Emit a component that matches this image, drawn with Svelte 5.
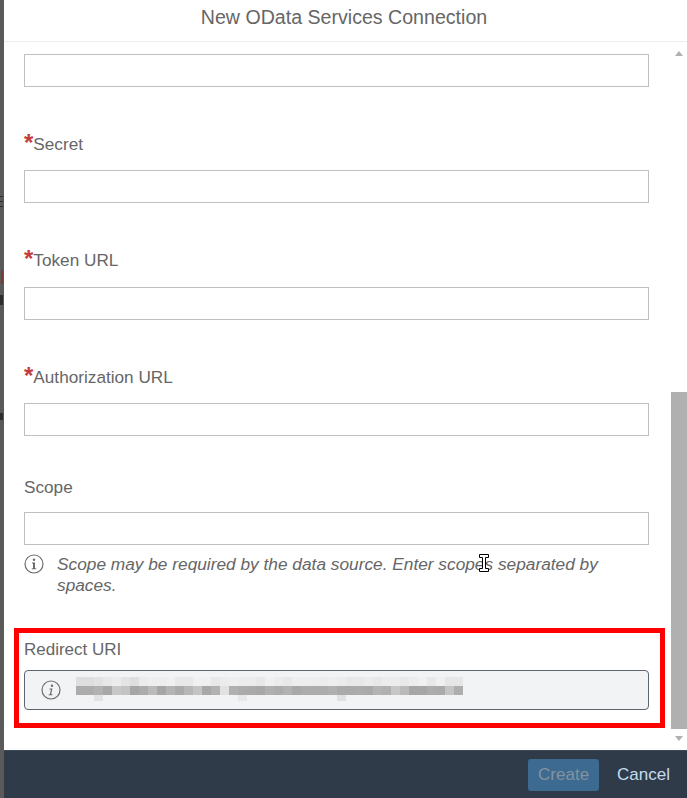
<script>
  const fields = [
    { label: 'Secret', required: true },
    { label: 'Token URL', required: true },
    { label: 'Authorization URL', required: true }
  ];

  // pixelated redirect uri, grey levels per 9px cell
  const topRow = [222,222,226,232,236,228,222,236,238,238,240,232,232,240,240,232,236,238,236,236,232,240,236,232,238,238,238,236,238,236,232,232,236,232,236,236,232,236,240,232,240,230,230];
  const midRow = [172,172,178,168,200,196,166,172,186,166,180,170,182,196,168,178,226,176,172,170,168,176,172,178,168,172,172,172,176,170,170,172,170,180,176,198,186,166,166,172,170,196,174];
  const lowCells = [{ i: 2, c: 226 }, { i: 18, c: 232 }, { i: 29, c: 224 }];
</script>

<div class="page">
  <div class="backdrop">
    <i class="mark line" style="top:196px"></i>
    <i class="mark line" style="top:201px"></i>
    <i class="mark line" style="top:206px"></i>
    <i class="mark red" style="top:270px;height:14px"></i>
    <i class="mark" style="top:295px;height:10px"></i>
    <i class="mark" style="top:413px;height:7px"></i>
  </div>

  <div class="dialog">
    <header>New OData Services Connection</header>

    <div class="middle">
      <div class="content">
        <input class="input first" type="text" />

        {#each fields as f}
          <div class="label"><span class="star">*</span>{f.label}</div>
          <input class="input" type="text" />
        {/each}

        <div class="label scope">Scope</div>
        <input class="input" type="text" />

        <div class="hint">
          <svg width="20" height="20" viewBox="0 0 20 20">
            <circle cx="10" cy="10" r="9" fill="none" stroke="#6a6d70" stroke-width="1.2" />
            <circle cx="10" cy="5.800" r="1.200" fill="#6a6d70" />
            <path d="M8 8.600h3v5.600h1.200v1H7.800v-1H9V9.600H8z" fill="#6a6d70" />
          </svg>
          <p>Scope may be required by the data source. Enter scopes separated by spaces.</p>
        </div>

        <div class="highlight">
          <div class="label redirect">Redirect URI</div>
          <div class="readonly">
            <svg width="20" height="20" viewBox="0 0 20 20">
              <circle cx="10" cy="10" r="9" fill="none" stroke="#6a6d70" stroke-width="1.2" />
              <circle cx="11" cy="5.800" r="1.200" fill="#6a6d70" />
              <path d="M8.600 8.600h2.800l-1.200 5.600h1.300l-.2 1H7.600l.2-1h1.100l1-4.600H8.400z" fill="#6a6d70" />
            </svg>
            <div class="blur">
              <div class="row">
                {#each topRow as c}
                  <span style="background:rgb({c},{c},{c})"></span>
                {/each}
              </div>
              <div class="row">
                {#each midRow as c}
                  <span style="background:rgb({c},{c},{c})"></span>
                {/each}
              </div>
              <div class="row low">
                {#each lowCells as l}
                  <span style="margin-left:{l.i * 9}px;background:rgb({l.c},{l.c},{l.c})"></span>
                {/each}
              </div>
            </div>
          </div>
        </div>
      </div>

      <div class="scrollbar">
        <div class="up"></div>
        <div class="track"><div class="thumb"></div></div>
        <div class="down"></div>
      </div>
    </div>

    <footer>
      <button class="create" disabled>Create</button>
      <button class="cancel">Cancel</button>
    </footer>
  </div>

  <!-- mouse cursor caught in the screenshot -->
  <svg class="cursor" width="10" height="19" viewBox="0 0 10 19">
    <path d="M.5.500h9v3h-3v11h3v3h-9v-3h3v-11h-3z" fill="#fff" stroke="#000" stroke-width="1" />
  </svg>
</div>

<style>
  :global(body) {
    margin: 0;
    background: #555;
  }

  .page {
    position: relative;
    display: flex;
    width: 687px;
    height: 798px;
    overflow: hidden;
    font-family: "Liberation Sans", Arial, sans-serif;
    font-size: 17.200px;
    color: #666;
  }

  .backdrop {
    position: relative;
    flex: 0 0 4px;
    background: #5a5a5a;
  }

  .mark {
    position: absolute;
    left: 0;
    width: 3px;
    background: #2d2d2d;
  }
  .mark.line {
    height: 1px;
  }
  .mark.red {
    left: 1px;
    width: 2px;
    background: #7a3a38;
  }

  .dialog {
    flex: 1;
    display: flex;
    flex-direction: column;
    min-width: 0;
    background: #fff;
  }

  header {
    flex: 0 0 42px;
    box-sizing: border-box;
    padding-right: 3px;
    border-bottom: 1px solid #eee;
    text-align: center;
    font-size: 19.600px;
    line-height: 34px;
    color: #666;
  }

  .middle {
    flex: 1;
    display: flex;
    min-height: 0;
  }

  .content {
    flex: 1;
    min-width: 0;
    padding: 12px 6px 0 20px;
  }

  .input {
    display: block;
    box-sizing: border-box;
    width: 625px;
    height: 33px;
    margin: 0;
    padding: 0;
    border: 1px solid #bfbfbf;
    background: #fff;
  }

  .label {
    height: 26px;
    margin: 44px 0 13.330px;
    line-height: 26px;
    color: #666;
    white-space: nowrap;
  }

  .star {
    color: #c43c3c;
    font-size: 24px;
    font-weight: bold;
    line-height: 20px;
    vertical-align: -1px;
  }

  .label.scope {
    margin: 38px 0 12px;
  }

  .hint {
    display: flex;
    gap: 13px;
    margin-top: 9px;
    height: 74px;
  }
  .hint svg {
    flex: none;
  }
  .hint p {
    width: 570px;
    margin: 0;
    font-style: italic;
    font-size: 17.300px;
    line-height: 21px;
    color: #666;
  }

  .highlight {
    box-sizing: border-box;
    width: 651px;
    height: 100px;
    margin-left: -10px;
    padding: 0 5px;
    border: 5px solid #f00;
  }

  .label.redirect {
    box-sizing: border-box;
    margin: 0;
    padding-top: 5px;
    height: 37px;
    line-height: 24px;
    font-size: 17px;
  }

  .readonly {
    display: flex;
    gap: 15px;
    align-items: center;
    box-sizing: border-box;
    width: 625px;
    height: 40px;
    padding-left: 16px;
    border: 1px solid #5c6670;
    border-radius: 4px;
    background: #f2f3f5;
  }
  .readonly svg {
    flex: none;
  }

  .blur {
    align-self: flex-start;
    margin-top: 6px;
  }
  .row {
    display: flex;
    height: 9px;
  }
  .row span {
    width: 9px;
    height: 9px;
  }
  .row.low {
    height: 6px;
    position: relative;
  }
  .row.low span {
    position: absolute;
    left: 0;
    height: 6px;
  }

  .scrollbar {
    flex: 0 0 16px;
    display: flex;
    flex-direction: column;
    align-items: center;
  }

  .up {
    margin-top: 9px;
    border: 4.500px solid transparent;
    border-top: 0;
    border-bottom: 5px solid #b0b0b0;
  }

  .track {
    flex: 1;
    width: 100%;
    display: flex;
    flex-direction: column;
    justify-content: flex-end;
  }

  .thumb {
    height: 337px;
    background: #b0b0b0;
  }

  .down {
    margin: 7px 0 9px;
    border: 4.500px solid transparent;
    border-bottom: 0;
    border-top: 5px solid #b0b0b0;
  }

  footer {
    flex: 0 0 48px;
    display: flex;
    align-items: center;
    justify-content: flex-end;
    gap: 18px;
    padding-right: 17px;
    background: #2f3b48;
    border-top: 1px solid #3c4a58;
    box-sizing: border-box;
  }

  button {
    font-family: inherit;
    font-size: 17px;
    border: 0;
    padding: 0;
    background: none;
  }

  .create {
    width: 71px;
    height: 32px;
    border-radius: 3px;
    background: #3d6a90;
    color: #84929f;
  }

  .cancel {
    color: #c4dcf0;
  }

  .cursor {
    position: absolute;
    left: 479px;
    top: 554px;
  }
</style>
